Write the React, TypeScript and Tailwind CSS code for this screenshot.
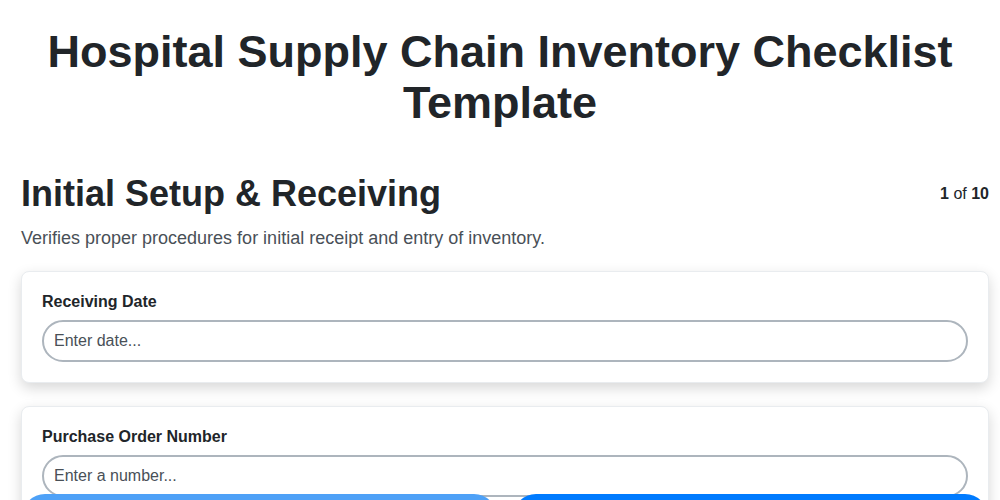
const fields = [
  { label: "Receiving Date", placeholder: "Enter date..." },
  { label: "Purchase Order Number", placeholder: "Enter a number..." },
  { label: "Supplier Name", placeholder: "Enter text..." },
];

export default function App() {
  return (
    <div className="min-h-screen bg-white font-['Liberation_Sans',Arial,sans-serif] text-[#212529]">
      <h1 className="mx-auto px-5 pt-[26px] text-center text-[45px] font-bold leading-[51px]">
        Hospital Supply Chain Inventory Checklist Template
      </h1>

      <div className="pb-24 pl-[21px] pr-[11px]">
        <div className="mt-[44px] flex items-start justify-between">
          <h2 className="text-[36px] font-bold leading-[44px]">Initial Setup &amp; Receiving</h2>
          <div className="pt-[10px] text-base">
            <span className="font-bold">1</span> of <span className="font-bold">10</span>
          </div>
        </div>
        <p className="mt-[9px] text-lg leading-[27px] text-[#495057]">
          Verifies proper procedures for initial receipt and entry of inventory.
        </p>

        <div className="mt-[19px] flex flex-col gap-[23px]">
          {fields.map((f) => (
            <div
              key={f.label}
              className="rounded-lg border border-[#e9ecef] bg-white p-5 shadow-[0_5px_14px_rgba(0,0,0,0.16)]"
            >
              <label className="mb-2 block text-base font-bold leading-5">{f.label}</label>
              <input
                className="h-[42px] w-full rounded-full border-2 border-[#adb5bd] px-[10px] text-base text-[#212529] outline-none placeholder:text-[#495057]"
                placeholder={f.placeholder}
              />
            </div>
          ))}
        </div>
      </div>

      <div className="fixed inset-x-0 bottom-[-40px] flex gap-4 pl-[22px] pr-[12px]">
        <button className="h-[46px] flex-1 rounded-full bg-[#4ea1f7] text-base font-bold text-white">
          Previous
        </button>
        <button className="h-[46px] flex-1 rounded-full bg-[#007bff] text-base font-bold text-white">
          Next
        </button>
      </div>
    </div>
  );
}
